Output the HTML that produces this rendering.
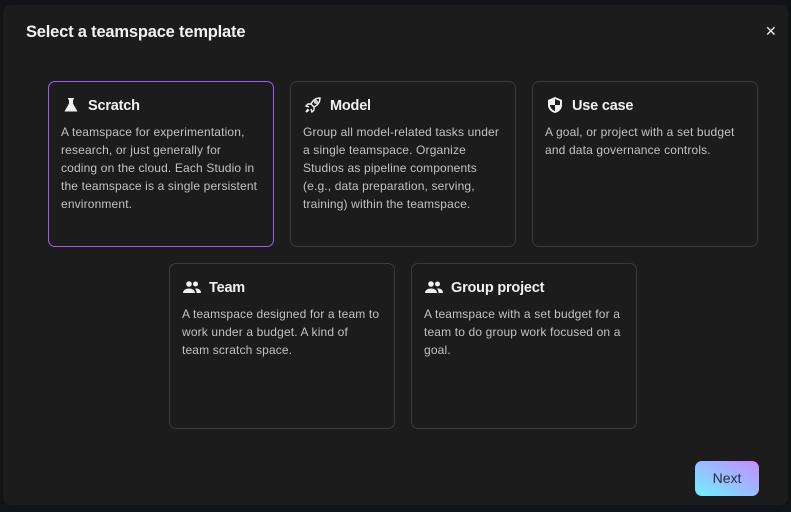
<!DOCTYPE html>
<html><head><style>
body{margin:0;width:791px;height:512px;background:#111317;font-family:"Liberation Sans",sans-serif;overflow:hidden;position:relative}
.dlg{position:absolute;left:3px;top:5px;width:785px;height:500px;background:#1c1c1c;border-radius:8px}
.bot{position:absolute;left:0;top:505px;width:791px;height:7px;background:#10151c}
h1{position:absolute;left:26px;top:23px;margin:0;font-size:16.5px;font-weight:bold;color:#f2f2f2;letter-spacing:-0.2px}
.x{position:absolute;left:765px;top:24px;color:#eee;font-size:14px;line-height:14px}
.card{position:absolute;width:226px;height:166px;border:1px solid #3a3a3a;border-radius:7px;box-sizing:border-box;background:#1c1c1c}
.card.sel{border-color:#a05cf0}
.t{position:absolute;left:39px;top:16px;font-size:14.5px;font-weight:bold;color:#f0f0f0;letter-spacing:-0.2px}
.ic{position:absolute;left:12px;top:13px;width:20px;height:20px}
.d{position:absolute;left:12px;top:41px;white-space:nowrap;font-size:12px;line-height:18px;color:#c2c2c2;letter-spacing:0.15px}
.btn{position:absolute;left:695px;top:461px;width:64px;height:35px;border-radius:7px;background:linear-gradient(to top right,#6ff0ff,#c58bff);color:#2a2a3a;font-size:14px;text-align:center;line-height:35px}
</style></head><body>
<div class="dlg"></div><div class="bot"></div>
<h1>Select a teamspace template</h1>
<div class="x">✕</div>

<div class="card sel" style="left:48px;top:81px">
<svg class="ic" viewBox="0 0 20 20"><path d="M7 3h6v1.5h-1v4l4.5 8H3.5l4.5-8v-4H7z" fill="#f0f0f0"/></svg>
<div class="t">Scratch</div>
<div class="d">A teamspace for experimentation,<br>research, or just generally for<br>coding on the cloud. Each Studio in<br>the teamspace is a single persistent<br>environment.</div></div>

<div class="card" style="left:290px;top:81px">
<svg class="ic" viewBox="0 0 20 20" fill="none" stroke="#f0f0f0" stroke-width="1.4"><path d="M17 3c-4 0-7 2-9 6l3 3c4-2 6-5 6-9z"/><path d="M8 9H5l-2 2 3 1M11 12v3l-2 2-1-3"/><circle cx="13" cy="7" r="1.2"/><path d="M5 14l-2 3 3-2"/></svg>
<div class="t">Model</div>
<div class="d">Group all model-related tasks under<br>a single teamspace. Organize<br>Studios as pipeline components<br>(e.g., data preparation, serving,<br>training) within the teamspace.</div></div>

<div class="card" style="left:532px;top:81px">
<svg class="ic" viewBox="0 0 20 20"><path d="M10 2l7 3v5c0 4-3 7-7 8-4-1-7-4-7-8V5z" fill="#f0f0f0"/><path d="M10 4l5 2v4h-5zM10 10H5c.3 3 2.3 5 5 6z" fill="#1c1c1c"/></svg>
<div class="t">Use case</div>
<div class="d">A goal, or project with a set budget<br>and data governance controls.</div></div>

<div class="card" style="left:169px;top:263px">
<svg class="ic" viewBox="0 0 20 20" fill="#f0f0f0"><circle cx="7" cy="7" r="2.8"/><circle cx="13.5" cy="7" r="2.5"/><path d="M1 16c0-3 3-4.5 6-4.5s6 1.5 6 4.5zM14 11.5c2.5 0 5 1.2 5 4.5h-4.5c0-2-.5-3.3-1.5-4.3z"/></svg>
<div class="t">Team</div>
<div class="d">A teamspace designed for a team to<br>work under a budget. A kind of<br>team scratch space.</div></div>

<div class="card" style="left:411px;top:263px">
<svg class="ic" viewBox="0 0 20 20" fill="#f0f0f0"><circle cx="7" cy="7" r="2.8"/><circle cx="13.5" cy="7" r="2.5"/><path d="M1 16c0-3 3-4.5 6-4.5s6 1.5 6 4.5zM14 11.5c2.5 0 5 1.2 5 4.5h-4.5c0-2-.5-3.3-1.5-4.3z"/></svg>
<div class="t">Group project</div>
<div class="d">A teamspace with a set budget for a<br>team to do group work focused on a<br>goal.</div></div>

<div class="btn">Next</div>
</body></html>
